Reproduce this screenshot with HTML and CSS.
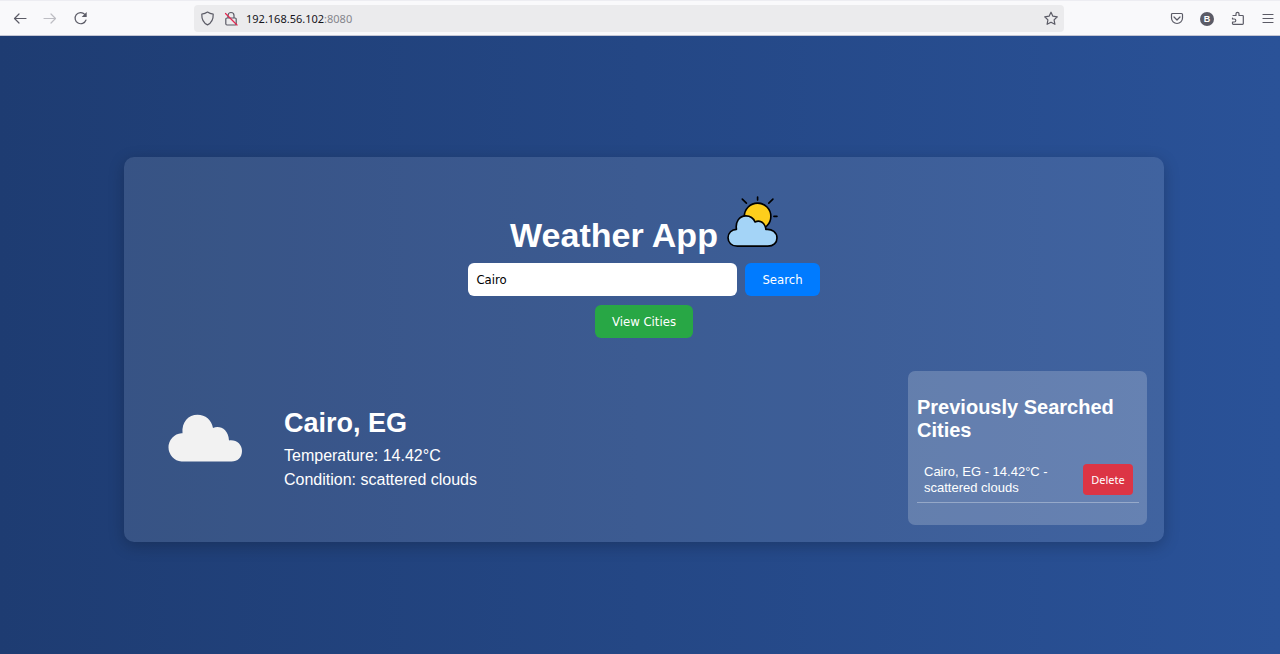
FILE: index.html
```html
<!DOCTYPE html>
<html lang="en">
<head>
<meta charset="utf-8">
<meta name="viewport" content="width=device-width, initial-scale=1">
<title>Weather App</title>
<link rel="stylesheet" href="styles.css">
</head>
<body>
<header class="toolbar">
  <nav class="nav-buttons" aria-label="Navigation">
    <button class="tool" aria-label="Back"><svg viewBox="0 0 16 16"><path d="M14 7.500H2.800M7 3L2.500 7.500 7 12"/></svg></button>
    <button class="tool tool-off" aria-label="Forward" disabled><svg viewBox="0 0 16 16"><path d="M2 7.500h11.200M9 3l4.500 4.500L9 12"/></svg></button>
    <button class="tool" aria-label="Reload"><svg viewBox="0 0 16 16"><path d="M14 9A5.600 5.600 0 1 1 12.800 3.300"/><path class="solid" d="M14.700 1v5H9.700z"/></svg></button>
  </nav>
  <div class="address">
    <svg class="icon" viewBox="0 0 16 16"><path d="M7.500 1.100c1.800 1.300 3.700 1.900 5.700 2.100.2 5-1.600 8.600-5.700 10.700C3.400 11.800 1.600 8.200 1.800 3.200 3.800 3 5.700 2.400 7.500 1.100z"/></svg>
    <svg class="icon" viewBox="0 0 16 16"><path d="M5 7V4.500a3 3 0 0 1 6 0V7M4 7h8a1.200 1.200 0 0 1 1.200 1.200v4.600A1.200 1.200 0 0 1 12 14H4a1.200 1.200 0 0 1-1.200-1.200V8.200A1.200 1.200 0 0 1 4 7z"/><path class="slash" d="M2.500 2.500l11.500 11.500"/></svg>
    <span class="url">192.168.56.102<span class="port">:8080</span></span>
    <button class="tool star" aria-label="Bookmark"><svg viewBox="0 0 16 16"><path d="M8 1.200l1.900 4 4.400.6-3.200 3.100.8 4.400L8 11.200l-3.900 2.100.8-4.400L1.700 5.800l4.400-.6z"/></svg></button>
  </div>
  <div class="actions">
    <button class="tool" aria-label="Pocket"><svg viewBox="0 0 16 16"><path d="M3.500 2.500h9a1 1 0 0 1 1 1V7a5.500 5.500 0 0 1-11 0V3.500a1 1 0 0 1 1-1zM5 6l3 3 3-3"/></svg></button>
    <button class="avatar" aria-label="Account">B</button>
    <button class="tool" aria-label="Extensions"><svg viewBox="0 0 16 16"><path d="M4 4.500h3V2.800a1.500 1.500 0 0 1 3 0v1.700h3.500a.8.8 0 0 1 .8.8v7.200a.8.8 0 0 1-.8.8H4.300a.8.8 0 0 1-.8-.8V11h1.800a1.500 1.500 0 0 0 0-3H3.500V7"/></svg></button>
    <button class="tool" aria-label="Menu"><svg viewBox="0 0 16 16"><path d="M3 3.500h10M3 7.500h10M3 11.500h10"/></svg></button>
  </div>
</header>
<main class="page">
  <section class="card">
    <h1 class="title">Weather App
      <svg class="logo" viewBox="0 0 50 50"><path class="rays" d="M30 1v3M15 3l4 4M45 3l-4 4M46 20h3"/><circle class="sun" cx="30" cy="20" r="13"/><path class="cloud" d="M10 49.200C4.500 49.200 1 45.500 1 41c0-4.800 3.700-8.300 8.300-8.300C8 25.500 12 19.500 18.500 19.500c4.200 0 7.500 2.300 9 6 4-2 8.500-.2 10 4.500.4 1 .6 1.800.6 2.800 6.200-.7 10.900 3 10.900 8.300 0 4.800-3.500 8.100-9 8.100z"/></svg>
    </h1>
    <form class="search">
      <input class="city" type="text" value="Cairo" aria-label="City">
      <button class="btn btn-search" type="button">Search</button>
    </form>
    <button class="btn btn-view" type="button">View Cities</button>
    <div class="results">
      <div class="weather">
        <svg class="condition" viewBox="0 0 76 48"><path d="M15 47.500A14.200 14.200 0 0 1 15 19.200h1C15 8 22 .8 31 .8c8 0 14 5 15.500 13.200C53 11 62 15 62.500 26.500 70 25.500 75.500 30.500 75.500 37S71 47.500 65 47.500z"/></svg>
        <div class="facts">
          <h2 class="place">Cairo, EG</h2>
          <p class="fact">Temperature: 14.42°C</p>
          <p class="fact">Condition: scattered clouds</p>
        </div>
      </div>
      <aside class="history">
        <h3 class="history-title">Previously Searched Cities</h3>
        <ul class="history-list">
          <li class="history-item"><span>Cairo, EG - 14.42°C - scattered clouds</span><button class="btn-delete" type="button">Delete</button></li>
        </ul>
      </aside>
    </div>
  </section>
</main>
</body>
</html>
```
FILE: styles.css
```css
* { box-sizing: border-box; }
body {
  margin: 0;
  min-height: 100vh;
  display: flex;
  flex-direction: column;
  font-family: "Liberation Sans", Arial, sans-serif;
  color: #fff;
  background: linear-gradient(to right, #1e3c72, #2a5298);
}
button { border: 0; padding: 0; cursor: pointer; }
h1, h2, h3, p, ul { margin: 0; padding: 0; }

.toolbar {
  display: grid;
  grid-template-columns: 182px minmax(0, 870px) 1fr;
  align-items: center;
  height: 36px;
  padding: 1px 4px 0 12px;
  background: #f9f9fb;
  border-top: 1px solid #ededf2;
  border-bottom: 1px solid #c4c6d4;
}
.nav-buttons { display: flex; gap: 14px; }
.tool { display: flex; background: none; }
.tool svg, .icon {
  width: 16px;
  height: 16px;
  fill: none;
  stroke: #5b5b66;
  stroke-width: 1.2;
  stroke-linecap: round;
  stroke-linejoin: round;
}
.tool-off svg { stroke: #bdbdc3; }
.tool .solid { fill: #5b5b66; stroke: none; }
.icon .slash { stroke: #e22850; }
.address {
  display: flex;
  align-items: center;
  gap: 7px;
  height: 27px;
  padding: 0 5px 0 6px;
  border-radius: 4px;
  background: #ebebed;
}
.url { font: 11px/16px "Noto Sans", "Open Sans", sans-serif; color: #15141a; }
.port { color: #85858c; }
.star { margin-left: auto; }
.actions { display: flex; justify-content: flex-end; align-items: center; gap: 15px; }
.avatar {
  width: 14px;
  height: 14px;
  border-radius: 50%;
  background: #5b5b66;
  color: #fff;
  font: bold 9px/14px "Liberation Sans", sans-serif;
}

.page {
  flex: 1;
  display: flex;
  align-items: center;
  justify-content: center;
  padding: 8px 0 0 8px;
}
.card {
  display: flex;
  flex-direction: column;
  align-items: center;
  width: 82%;
  max-width: 1040px;
  padding: 39px 17px 17px;
  border-radius: 10px;
  background: rgba(255, 255, 255, 0.11);
  box-shadow: 0 4px 16px rgba(0, 0, 0, 0.22);
}
.title {
  display: flex;
  align-items: flex-end;
  gap: 9px;
  font-size: 34px;
  line-height: 24px;
}
.logo { width: 51px; height: 51px; stroke: #000; stroke-width: 1.600; stroke-linecap: round; stroke-linejoin: round; }
.rays { fill: none; }
.sun { fill: #fdce1c; }
.cloud { fill: #a4d4f7; }
.search { display: flex; gap: 8px; margin: 16px 0 9px; }
.city, .btn {
  height: 33px;
  border: 0;
  border-radius: 6px;
  font: 13px/17px "DejaVu Sans Condensed", "Noto Sans", sans-serif;
}
.city { width: 269px; padding: 0 8px; color: #000; background: #fff; }
.btn { padding: 0 17px; color: #fff; }
.btn-search { background: #007bff; }
.btn-view { background: #28a745; }
.results {
  display: flex;
  justify-content: space-between;
  align-items: center;
  width: 100%;
  margin-top: 33px;
}
.weather { display: flex; align-items: center; gap: 41px; padding: 4px 0 0 25px; }
.condition { width: 77px; height: 48px; margin-bottom: 23px; fill: #f2f2f2; }
.place { margin-bottom: 5px; font-size: 27px; line-height: 32px; }
.fact { font-size: 16px; line-height: 24px; }
.history { width: 239px; padding: 25px 8px 22px 9px; border-radius: 7px; background: rgba(255, 255, 255, 0.2); }
.history-title { font-size: 20px; line-height: 23px; }
.history-list { margin-top: 16px; list-style: none; }
.history-item {
  display: flex;
  align-items: center;
  justify-content: space-between;
  gap: 8px;
  padding: 6px 6px 6px 7px;
  border-bottom: 1px solid rgba(255, 255, 255, 0.32);
  font-size: 13px;
  line-height: 16px;
}
.btn-delete {
  flex: none;
  width: 50px;
  height: 31px;
  border-radius: 4px;
  background: #dc3545;
  color: #fff;
  font: 11px/14px "Noto Sans", sans-serif;
}
```
